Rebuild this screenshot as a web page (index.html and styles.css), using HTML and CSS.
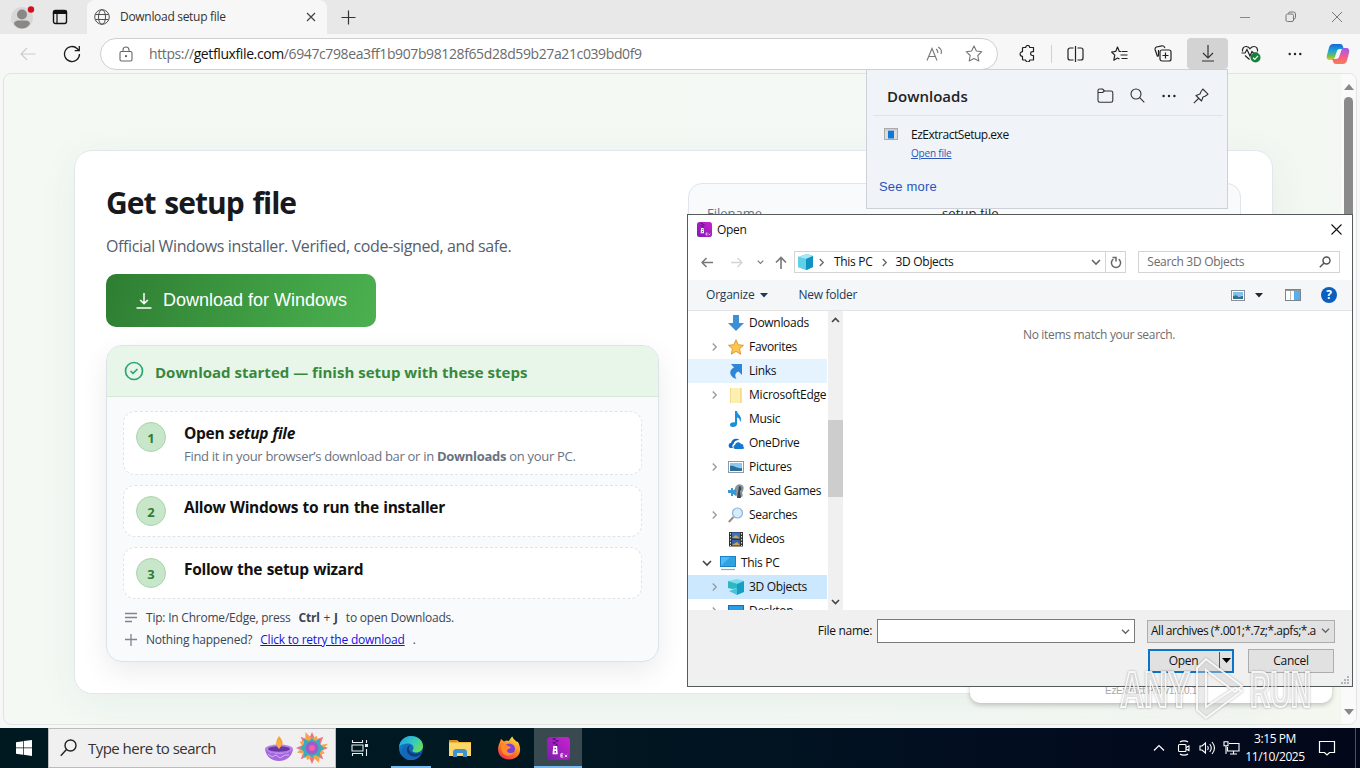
FILE: index.html
```html
<!DOCTYPE html>
<html lang="en">
<head>
<meta charset="utf-8">
<title>Download setup file</title>
<link rel="stylesheet" href="styles.css">
</head>
<body>
<svg class="defs" aria-hidden="true">
  <defs>
    <linearGradient id="cp1" x1="0" y1="0" x2="0" y2="1"><stop offset="0" stop-color="#1667d8"/><stop offset=".45" stop-color="#22a7d8"/><stop offset=".75" stop-color="#6cc04a"/><stop offset="1" stop-color="#f4c52a"/></linearGradient>
    <linearGradient id="cp2" x1="0" y1="0" x2="0" y2="1"><stop offset="0" stop-color="#9a5cf0"/><stop offset=".5" stop-color="#ee5a9a"/><stop offset="1" stop-color="#fb7d4a"/></linearGradient>
    <linearGradient id="ez" x1="0" y1="1" x2="1" y2="0"><stop offset="0" stop-color="#7c1cae"/><stop offset="1" stop-color="#cc22d0"/></linearGradient>
    <linearGradient id="eg1" x1="0" y1="0" x2="1" y2=".6"><stop offset="0" stop-color="#1b9de2"/><stop offset=".6" stop-color="#36c9c0"/><stop offset="1" stop-color="#66dd5c"/></linearGradient>
    <linearGradient id="eg2" x1="0" y1="0" x2="1" y2="1"><stop offset="0" stop-color="#1688d8"/><stop offset="1" stop-color="#0c4aa0"/></linearGradient>
    <linearGradient id="ff" x1=".8" y1="0" x2=".3" y2="1"><stop offset="0" stop-color="#ffe14a"/><stop offset=".5" stop-color="#ff8a20"/><stop offset="1" stop-color="#f0304a"/></linearGradient>
    <symbol id="cube" viewBox="0 0 16 16"><path d="M1 3l9-3 6 2v11l-6 3-9-3z" fill="#35bfe0"/><path d="M1 3l9-3 6 2-7 3z" fill="#a5e9f5"/><path d="M9 5l7-3v11l-7 3z" fill="#0f93c4"/><path d="M1 3l8 2v11l-8-3z" fill="#5fd0e8"/></symbol>
    <symbol id="cube-open" viewBox="0 0 16 16"><path d="M0 2l9-2 7 2-6 3z" fill="#7fdcea"/><path d="M0 2l10 3v4L4 10 0 9z" fill="#2fb6c4"/><path d="M9 5l7-3v11l-7 3z" fill="#149fc6"/><path d="M1 12l8-3v7z" fill="#49c3d6"/></symbol>
    <symbol id="chev-r" viewBox="0 0 8 10"><path d="M2 1l4 4-4 4" fill="none" stroke="currentColor" stroke-width="1.5"/></symbol>
    <symbol id="chev-d" viewBox="0 0 10 8"><path d="M1 2l4 4 4-4" fill="none" stroke="currentColor" stroke-width="1.6"/></symbol>
    <symbol id="ezi" viewBox="0 0 24 24"><rect width="24" height="24" rx="4" fill="url(#ez)"/><path d="M6 1h3v2H6zM9 3h3v2H9zM6 5h3v2H6zM9 7h2v2H9z" fill="#5c1386"/><path d="M6.500 9.500h4l.7 8.500H5.800zM7.800 11.300v1.600h1.500v-1.600zM7.700 14.500v2h1.700v-2z" fill="#fff" fill-rule="evenodd"/><path d="M17 17.500h-2.500V21H17M14.500 19.200h2M18.500 18.500L21 21M21 18.500L18.500 21" stroke="#fff" stroke-width=".9" fill="none"/></symbol>
  </defs>
</svg>

<div class="desktop">
  <div class="browser">
    <div class="tabs">
      <div class="avatar"><svg width="24" height="24" viewBox="0 0 24 24"><circle cx="11" cy="13" r="11" fill="#d8d8d8"/><circle cx="11" cy="9.500" r="5" fill="#8a8886"/><path d="M3 19c0-2 2-3.500 4-3.500h8c2 0 4 1.500 4 3.500-2 3-5 4.500-8 4.500s-6-1.500-8-4.500z" fill="#8a8886"/><circle cx="20" cy="4.500" r="3.200" fill="#d40f1f"/></svg></div>
      <div class="workspace"><svg width="16" height="16" viewBox="0 0 16 16"><rect x="1.500" y="1.500" width="13" height="13" rx="2" fill="none" stroke="#111" stroke-width="1.400"/><path d="M1.500 4.500V3a1.500 1.500 0 011.500-1.500h10A1.500 1.500 0 0114.500 3v1.500zM5 4v11" stroke="#111" stroke-width="1.200" fill="#111"/></svg></div>
      <div class="tab">
        <svg width="16" height="16" viewBox="0 0 16 16" fill="none" stroke="#505050" stroke-width="1"><circle cx="8" cy="8" r="7.300"/><ellipse cx="8" cy="8" rx="3.500" ry="7.300"/><path d="M1.500 5.500h13M1.500 10.500h13"/></svg>
        <span class="tab-title">Download setup file</span>
        <svg width="10" height="10" viewBox="0 0 10 10" stroke="#444" stroke-width="1.200"><path d="M1 1l8 8M9 1L1 9"/></svg>
      </div>
      <svg class="newtab" width="15" height="15" viewBox="0 0 15 15" stroke="#333" stroke-width="1.200"><path d="M7.500 .5v14M.5 7.500h14"/></svg>
      <div class="winctl">
        <svg width="12" height="12" viewBox="0 0 12 12" stroke="#888"><path d="M1 6.500h10"/></svg>
        <svg width="12" height="12" viewBox="0 0 12 12" fill="none" stroke="#777"><rect x="1" y="3" width="7.500" height="7.500" rx="1.500"/><path d="M3.500 3V2.500a1.500 1.500 0 011.500-1.500h3.500a2 2 0 012 2v3.500a1.500 1.500 0 01-1.500 1.500H8.500"/></svg>
        <svg width="12" height="12" viewBox="0 0 12 12" stroke="#777"><path d="M1 1l10 10M11 1L1 11"/></svg>
      </div>
    </div>
    <div class="toolbar">
      <div class="slot back"><svg width="16" height="14" viewBox="0 0 16 14" fill="none" stroke="#ccc" stroke-width="1.200"><path d="M15.500 7H1M7 1L1 7l6 6"/></svg></div>
      <div class="slot reload"><svg width="18" height="18" viewBox="0 0 18 18" fill="none" stroke="#1c1c1c" stroke-width="1.300"><path d="M16.500 9a7.500 7.500 0 11-2.200-5.300L16 5.500M16.300 1v4.700h-4.600"/></svg></div>
      <div class="url">
        <svg width="14" height="16" viewBox="0 0 14 16" fill="none" stroke="#666" stroke-width="1.100"><rect x="1" y="5.500" width="12" height="9.500" rx="1.500"/><path d="M4 5.500V4a3 3 0 016 0v1.500"/><circle cx="7" cy="10.200" r=".6" fill="#555"/></svg>
        <span class="addr">https://<b>getfluxfile.com</b>/6947c798ea3ff1b907b98128f65d28d59b27a21c039bd0f9</span>
        <svg class="aloud" width="17" height="16" viewBox="0 0 17 16" fill="none" stroke="#777" stroke-width="1.100"><path d="M1 14.500L6 2.500l5 12M2.800 10.500h6.400M10 3c1.500 1 2 2.500 1.700 4M12.300 1c2.700 1.800 3.600 4.500 2.700 7"/></svg>
        <svg class="star" width="18" height="17" viewBox="0 0 18 17" fill="none" stroke="#777" stroke-width="1.100" stroke-linejoin="round"><path d="M9 1l2.400 5 5.400.7-4 3.800 1 5.500L9 13.400 4.200 16l1-5.500-4-3.800L6.600 6z"/></svg>
      </div>
      <div class="slot ext"><svg width="17" height="17" viewBox="0 0 17 17" fill="none" stroke="#222" stroke-width="1.200" stroke-linejoin="round"><path d="M4.500 2.500h2.200a2 2 0 014 0h3.800v4.200h-1a1.900 1.900 0 000 3.800h1v4.500h-3.800a2 2 0 01-4 0H4.500c-.8 0-1-.3-1-1v-2.600a2.300 2.300 0 010-4.800V3.500c0-.7.200-1 1-1z"/></svg></div>
      <div class="sep"></div>
      <div class="slots">
        <div class="slot"><svg width="17" height="16" viewBox="0 0 17 16" fill="none" stroke="#222" stroke-width="1.200"><path d="M6.500 2H3a2 2 0 00-2 2v8a2 2 0 002 2h3.500M10.500 2H14a2 2 0 012 2v8a2 2 0 01-2 2h-3.500M8.500 0v16"/></svg></div>
        <div class="slot"><svg width="17" height="16" viewBox="0 0 17 16" fill="none" stroke="#222" stroke-width="1.200" stroke-linejoin="round"><path d="M10 5.500L8.200 5.300 6.500 1 4.800 5.300.6 6l3.200 3.200-1 5L6.500 12 8.500 13M10.500 5.500h6M9.500 9h7M10.500 12.500h6"/></svg></div>
        <div class="slot"><svg width="18" height="17" viewBox="0 0 18 17" fill="none" stroke="#222" stroke-width="1.200"><rect x="6" y="5" width="11" height="11" rx="2"/><path d="M11.500 7.500v6M8.500 10.500h6M3.500 11.500L1.200 5C.8 3.500 1.200 2.500 2.500 2L8 .8c1.300-.2 2 .2 2.500 1.500L11 3M4.500 5v5c0 1-.3 1.500-1 1.500"/></svg></div>
        <div class="slot active"><svg width="14" height="17" viewBox="0 0 14 17" fill="none" stroke="#333" stroke-width="1.200"><path d="M7 0v12.500M2 8l5 5 5-5M1 16h12"/></svg></div>
        <div class="slot"><svg width="20" height="18" viewBox="0 0 20 18" fill="none" stroke="#222" stroke-width="1.200"><path d="M1.500 6.500C1 3.500 2.800 1.500 5 1.500c1.700 0 3 1 4 2.200 1-1.200 2.300-2.200 4-2.200 2.300 0 4 2 3.500 5M4 10.500l4.500 4M.5 8h3.500l2-3.500 3 6.500 2-4.500 1.500 1.500h4"/><circle cx="14.500" cy="12.500" r="5" fill="#14803a" stroke="none"/><path d="M12 12.700l1.800 1.700 3.200-3.500" stroke="#fff"/></svg></div>
        <div class="slot"><svg width="14" height="4" viewBox="0 0 14 4" fill="#222"><circle cx="1.700" cy="2" r="1.200"/><circle cx="7" cy="2" r="1.200"/><circle cx="12.300" cy="2" r="1.200"/></svg></div>
        <div class="slot copilot"><svg width="24" height="22" viewBox="0 0 24 22"><path d="M7 1h7c2 0 2.500 1 3 2.500l.8 2.500H14c-2 0-2.800 1-3.300 2.700L8.500 15c-.5 1.500-1.300 2-2.700 2H4c-3 0-3.800-2-3-5l2-7.500C3.700 2.200 5 1 7 1z" fill="url(#cp1)"/><path d="M17 21h-7c-2 0-2.500-1-3-2.500L6.200 16H10c2 0 2.800-1 3.300-2.700L15.500 7c.5-1.500 1.300-2 2.700-2H20c3 0 3.800 2 3 5l-2 7.500c-.7 2.300-2 3.500-4 3.500z" fill="url(#cp2)"/></svg></div>
      </div>
    </div>
    <div class="view">
      <main class="card">
        <section class="left">
          <h1>Get setup file</h1>
          <p class="sub">Official Windows installer. Verified, code-signed, and safe.</p>
          <a class="cta"><svg width="16" height="18" viewBox="0 0 16 18" fill="none" stroke="#fff" stroke-width="1.500"><path d="M8 1v10.500M4.200 8L8 11.800 11.800 8M.5 16h15"/></svg><span>Download for Windows</span></a>
          <div class="steps">
            <div class="steps-head"><svg width="20" height="20" viewBox="0 0 20 20" fill="none" stroke="#2aa775" stroke-width="1.700"><circle cx="10" cy="10" r="8.500"/><path d="M6.500 10l2.500 2.400 4.500-4.400"/></svg><span>Download started — finish setup with these steps</span></div>
            <div class="steps-body">
              <div class="step first"><div class="num">1</div><div><div class="st">Open <i>setup file</i></div><div class="sd">Find it in your browser’s download bar or in <b>Downloads</b> on your PC.</div></div></div>
              <div class="step"><div class="num">2</div><div class="st">Allow Windows to run the installer</div></div>
              <div class="step"><div class="num">3</div><div class="st">Follow the setup wizard</div></div>
              <div class="tip"><svg width="14" height="14" viewBox="0 0 14 14" stroke="#7d858f" stroke-width="1.300"><path d="M1 2.500h12M1 6.500h12M1 10.500h7"/></svg><span>Tip: In Chrome/Edge, press</span><span class="kbd"><b>Ctrl</b> + <b>J</b></span><span>to open Downloads.</span></div>
              <div class="tip"><svg width="14" height="14" viewBox="0 0 14 14" stroke="#7d858f" stroke-width="1.300"><path d="M7 1v12M1 6.500h12"/></svg><span>Nothing happened?</span><a class="retry">Click to retry the download</a><span>.</span></div>
            </div>
          </div>
        </section>
        <section class="right"><div class="meta"><span class="k">Filename</span><span class="v">setup file</span></div></section>
      </main>
      <div class="scroll"><i class="up"></i><i class="thumb"></i><i class="down"></i></div>
    </div>
  </div>

  <div class="flyout">
    <div class="fly-head"><span class="fly-title">Downloads</span>
      <svg width="17" height="15" viewBox="0 0 17 15" fill="none" stroke="#333" stroke-width="1.100" stroke-linejoin="round"><path d="M1 12.500V2.500C1 1.600 1.600 1 2.500 1h3l2 2H14c1 0 1.800.7 1.800 1.700v7.800c0 1-.8 1.700-1.800 1.700H2.700C1.700 14.200 1 13.500 1 12.500zM1 4.500h4.500L7.500 3"/></svg>
      <svg width="15" height="15" viewBox="0 0 15 15" fill="none" stroke="#333" stroke-width="1.100"><circle cx="6" cy="6" r="5"/><path d="M9.700 9.700l4.600 4.600"/></svg>
      <svg width="14" height="4" viewBox="0 0 14 4" fill="#222"><circle cx="1.600" cy="2" r="1.200"/><circle cx="7" cy="2" r="1.200"/><circle cx="12.400" cy="2" r="1.200"/></svg>
      <svg width="16" height="16" viewBox="0 0 16 16" fill="none" stroke="#333" stroke-width="1.100" stroke-linejoin="round"><path d="M9.800 1L15 6.200l-3 2-2 .8-1.500 4L3 7.500 7 6l.8-2zM5.500 10.500L.8 15.200"/></svg>
    </div>
    <div class="fly-item"><svg width="14" height="12" viewBox="0 0 14 12"><rect x=".5" y=".5" width="13" height="11" fill="#dcdcdc" stroke="#aaa"/><rect x="4" y="2.500" width="6" height="8" fill="#1177d7"/><path d="M1 2h12" stroke="#b8c4d0"/></svg><div><div class="fname">EzExtractSetup.exe</div><a class="ofile">Open file</a></div></div>
    <a class="more">See more</a>
  </div>

  <div class="ezwin">EzExtract Pro v1.0.0.1</div>

  <div class="dialog">
    <div class="d-title"><svg width="15" height="15"><use href="#ezi"/></svg><span>Open</span><svg class="x" width="11" height="11" viewBox="0 0 11 11" stroke="#111" stroke-width="1.100"><path d="M.5 .5l10 10M10.500 .5l-10 10"/></svg></div>
    <div class="d-nav">
      <svg width="12" height="11" viewBox="0 0 12 11" fill="none" stroke="#777" stroke-width="1.500"><path d="M12 5.500H1M5.500 1L1 5.500 5.500 10"/></svg>
      <svg class="n2" width="12" height="11" viewBox="0 0 12 11" fill="none" stroke="#d4d4d4" stroke-width="1.300"><path d="M0 5.500h11M6.500 1L11 5.500 6.500 10"/></svg>
      <svg class="n3" width="7" height="6"><use href="#chev-d"/></svg>
      <svg class="n4" width="12" height="13" viewBox="0 0 12 13" fill="none" stroke="#777" stroke-width="1.600"><path d="M6 13V1.500M1 6.500l5-5 5 5"/></svg>
      <div class="path"><svg width="16" height="16"><use href="#cube"/></svg><svg class="pc" width="7" height="9"><use href="#chev-r"/></svg><span>This PC</span><svg class="pc2" width="7" height="9"><use href="#chev-r"/></svg><span>3D Objects</span><svg class="pd" width="10" height="8"><use href="#chev-d"/></svg><div class="refresh"><svg width="12" height="13" viewBox="0 0 12 13" fill="none" stroke="#666" stroke-width="1.500"><path d="M3.300 3.200A4.600 4.600 0 108.700 3.200M2.500 1.500h3.500v4"/></svg></div></div>
      <div class="search"><span>Search 3D Objects</span><svg width="12" height="12" viewBox="0 0 12 12" fill="none" stroke="#555" stroke-width="1.500"><circle cx="7.500" cy="4.500" r="3.500"/><path d="M5 7L.8 11.200"/></svg></div>
    </div>
    <div class="d-tools"><span class="org">Organize</span><svg width="8" height="5" viewBox="0 0 8 5"><path d="M0 0h8L4 4.500z" fill="#1e3a56"/></svg><span class="nf">New folder</span>
      <svg class="t1" width="14" height="11" viewBox="0 0 14 11"><rect x=".5" y=".5" width="13" height="10" fill="#fff" stroke="#8a9099"/><path d="M2 2h10v3l-4 2-3-2-3 1z" fill="#7fc0ec"/><path d="M2 6l3-1 3 2 4-1.500V9H2z" fill="#36718f"/></svg>
      <svg width="8" height="5" viewBox="0 0 8 5"><path d="M0 0h8L4 4.500z" fill="#1e2a36"/></svg>
      <svg class="t2" width="16" height="12" viewBox="0 0 16 12"><rect x=".5" y=".5" width="15" height="11" fill="#fff" stroke="#7a8490"/><path d="M.5 1.500h15" stroke="#9a9a9a"/><path d="M5.500 2v9" stroke="#bbb"/><rect x="9" y="2" width="6" height="9" fill="#58aee8"/></svg>
      <div class="help">?</div>
    </div>
    <div class="d-body">
      <div class="tree">
        <div class="row"><i></i><svg width="16" height="16" viewBox="0 0 16 16"><path d="M5 0h6v8h5l-8 8-8-8h5z" fill="#3f8fd6"/></svg><span>Downloads</span></div>
        <div class="row"><i><svg width="7" height="10"><use href="#chev-r"/></svg></i><svg width="16" height="16" viewBox="0 0 16 16"><path d="M8 .8l2.200 5 5.300.5-4 3.600 1.200 5.300L8 12.400l-4.700 2.800 1.200-5.300-4-3.600 5.300-.5z" fill="#fdc64f" stroke="#dd9a3c"/></svg><span>Favorites</span></div>
        <div class="row hover"><i></i><svg width="16" height="16" viewBox="0 0 16 16"><path d="M3 1h11v11l-3.500-3.500C7 10 6.500 12.500 8.500 16 3 14.500 1 10 3 7c1-1.500 2-2 3-2.500z" fill="#2d86d8"/></svg><span>Links</span></div>
        <div class="row"><i><svg width="7" height="10"><use href="#chev-r"/></svg></i><svg width="16" height="16" viewBox="0 0 16 16"><path d="M2 1h9l3 1v14H2z" fill="#fdeeb1"/><path d="M12 1h1.500v15H12z" fill="#f3db8a"/><path d="M2 1h1v15H2z" fill="#f1dc93"/></svg><span class="edge">MicrosoftEdge</span></div>
        <div class="row"><i></i><svg width="16" height="16" viewBox="0 0 16 16"><path d="M7 0h2c0 3 4 4 4 8 0 1.500-.5 2.500-1 3 0-3-1-4-3-4.500V13c0 2-2 3-4 3s-3-1-3-2.300C2 12 4 11 7 11.500z" fill="#1b8fdc"/></svg><span>Music</span></div>
        <div class="row"><i></i><svg width="16" height="16" viewBox="0 0 16 16"><path d="M1 12c-1-2 0-4 2-4 .5-3.500 5-6 8.500-3C8 5 6 6.500 5.500 9 4 10 4 11.500 5 13H3c-1 0-1.500-.3-2-1z" fill="#0f6cbd"/><path d="M7 14c-2-.5-2-3.500 0-4 .5-3 4.500-3.800 6-1 2-.3 2.700 1 2.200 2.500 1.200.8.800 2.500-.7 2.500z" fill="#1479d0"/></svg><span>OneDrive</span></div>
        <div class="row"><i><svg width="7" height="10"><use href="#chev-r"/></svg></i><svg width="16" height="16" viewBox="0 0 16 16"><rect x=".5" y="2.500" width="15" height="11" fill="#fff" stroke="#8d9aa6"/><path d="M2 4h12v5H2z" fill="#8cc8f0"/><path d="M2 7c4-1 7 3 12 2v3H2z" fill="#2f6f96"/></svg><span>Pictures</span></div>
        <div class="row"><i></i><svg width="16" height="16" viewBox="0 0 16 16"><path d="M7 5c1-3 4-5 7-3 2 1 2 4 1 6l-1 2c1 1 1 3 0 4H9c-2-3-2-7-2-9z" fill="#8996a0"/><path d="M11 3c3 0 3 4 1 5l1 7H9z" fill="#3a4650"/><path d="M0 7h3V5h2v2l3-1v7l-3-2v2H3v-3H0z" fill="#3a97d3"/></svg><span>Saved Games</span></div>
        <div class="row"><i><svg width="7" height="10"><use href="#chev-r"/></svg></i><svg width="16" height="16" viewBox="0 0 16 16"><path d="M5.500 10L.8 15" stroke="#9a8f88" stroke-width="2"/><circle cx="9.500" cy="6" r="5" fill="#d5edfb" stroke="#8fb4d2" stroke-width="1.200"/></svg><span>Searches</span></div>
        <div class="row"><i></i><svg width="16" height="16" viewBox="0 0 16 16"><rect x="1" y="1" width="14" height="14.500" fill="#2f3237"/><rect x="4" y="1.500" width="8" height="6" fill="#3f73b8"/><rect x="4" y="9" width="8" height="6" fill="#3b62a3"/><path d="M4 7l4-3 4 3.500zM4 14l5-3 3 3z" fill="#d6a247"/><path d="M2.500 2v13M13.500 2v13" stroke="#e4e4e4" stroke-dasharray="1.500 1.500"/></svg><span>Videos</span></div>
        <div class="row top"><i class="open"><svg width="10" height="8"><use href="#chev-d"/></svg></i><svg width="16" height="16" viewBox="0 0 16 16"><rect x="0" y="1" width="16" height="11" fill="#1a83c8"/><path d="M1 2h14v9H1z" fill="#4ebcf2"/><path d="M1 11l9-9h5v9z" fill="#2fa2e2"/><path d="M1 14.500h14" stroke="#98a6b0" stroke-width="1.200"/></svg><span>This PC</span></div>
        <div class="row sel"><i><svg width="7" height="10"><use href="#chev-r"/></svg></i><svg width="16" height="16"><use href="#cube-open"/></svg><span>3D Objects</span></div>
        <div class="row"><i><svg width="7" height="10"><use href="#chev-r"/></svg></i><svg width="16" height="16" viewBox="0 0 16 16"><rect y="2" width="16" height="12" fill="#0f6fc0"/><rect x="1" y="3" width="14" height="9" fill="#2a9ce8"/></svg><span>Desktop</span></div>
      </div>
      <div class="tscroll"><svg width="9" height="6" viewBox="0 0 9 6" fill="none" stroke="#444" stroke-width="1.600"><path d="M1 5l3.500-3.500L8 5"/></svg><div class="tthumb"></div><svg width="9" height="6" viewBox="0 0 9 6" fill="none" stroke="#444" stroke-width="1.600"><path d="M1 1l3.500 3.500L8 1"/></svg></div>
      <div class="files">No items match your search.</div>
    </div>
    <div class="d-foot">
      <div class="f1"><label>File name:</label><div class="fin"><svg width="9" height="7"><use href="#chev-d"/></svg></div><div class="ftype"><span>All archives (*.001;*.7z;*.apfs;*.a</span><svg width="9" height="7"><use href="#chev-d"/></svg></div></div>
      <div class="f2"><div class="btn ok"><span>Open</span><em><svg width="9" height="5" viewBox="0 0 9 5"><path d="M0 0h9L4.500 5z" fill="#000"/></svg></em></div><div class="btn">Cancel</div></div>
      <svg class="grip" width="9" height="9" viewBox="0 0 9 9" fill="#b5b5b5"><path d="M6 0h2v2H6zM3 3h2v2H3zM6 3h2v2H6zM0 6h2v2H0zM3 6h2v2H3zM6 6h2v2H6z"/></svg>
    </div>
  </div>

  <svg class="mark" width="210" height="72" viewBox="0 0 210 72">
    <g fill="#fff" fill-opacity=".35" stroke="#fff" stroke-opacity=".85" stroke-width="2">
      <text x="10" y="54" textLength="70" lengthAdjust="spacingAndGlyphs">ANY</text>
      <text x="140" y="54" textLength="61" lengthAdjust="spacingAndGlyphs">RUN</text>
      <path d="M87 15l9-9 36 27-7 6-29-22v37l29-19 7 3-36 27-9-8z"/>
    </g>
  </svg>

  <div class="taskbar">
    <div class="start"><svg width="16" height="16" viewBox="0 0 16 16" fill="#fff"><path d="M0 2.300L7 1.200v6.300H0zM7.700 1.100L16 0v7.500H7.700zM0 8.300h7v6.400L0 13.700zM7.700 8.300H16V16l-8.300-1.200z"/></svg></div>
    <div class="tsearch"><svg width="18" height="18" viewBox="0 0 18 18" fill="none" stroke="#222" stroke-width="1.400"><circle cx="10.500" cy="6.500" r="5.500"/><path d="M6.500 10.500L.8 16.800"/></svg><span>Type here to search</span>
      <svg class="festive" width="64" height="36" viewBox="0 0 64 36"><path d="M14 6c4 5 5 8 1 13-5-3-5-7-1-13z" fill="#f7a02c"/><path d="M14 11c2 3 2 5 0 8-2-3-2-5 0-8z" fill="#ffe279"/><ellipse cx="14" cy="19" rx="14" ry="4.500" fill="#b782e8"/><ellipse cx="14" cy="19" rx="11" ry="2.700" fill="#6a38a5"/><path d="M14 9c3 4 3 7 0 10-3-3-3-6 0-10z" fill="#f9b03c"/><path d="M0 19c1 8 7 12 14 12s13-4 14-12c-4 6-24 6-28 0z" fill="#a468de"/><path d="M3 24l4 3 4-2 4 3 5-3 4 0" stroke="#d6aef5" fill="none"/>
        <g transform="translate(47 18)"><g fill="#ef7286"><path id="pt" d="M0-16l4 9h-8z"/><use href="#pt" transform="rotate(45)"/><use href="#pt" transform="rotate(90)"/><use href="#pt" transform="rotate(135)"/><use href="#pt" transform="rotate(180)"/><use href="#pt" transform="rotate(225)"/><use href="#pt" transform="rotate(270)"/><use href="#pt" transform="rotate(315)"/></g><path transform="rotate(22.500)" d="M0-13l5 8 8-5-3 8 4 2-4 3 2 8-8-3-4 5-4-5-8 2 3-8-5-3 5-3-3-8 8 3z" fill="#f4a646"/><path d="M0-10l3 3 5-2 0 5 4 4-4 4 0 5-5-2-3 3-3-3-5 2 0-5-4-4 4-4 0-5 5 2z" fill="#39aeba"/><circle r="6.500" fill="#9d5ccc"/><circle r="3" fill="#ee5fae"/></g></svg>
    </div>
    <div class="app"><svg width="18" height="16" viewBox="0 0 18 16" fill="none" stroke="#e8edf0" stroke-width="1.100"><path d="M1.500 0v2.500h10V0M1.500 16v-2.500h10V16M1 5h11v6H1zM15.500 0v3M15.500 9v7"/><path d="M14.500 4.500h2v2h-2z" fill="#fff"/></svg></div>
    <div class="app run"><svg width="24" height="24" viewBox="0 0 24 24"><circle cx="12" cy="12" r="12" fill="url(#eg2)"/><path d="M0 11C1 4 6 0 12 0c7 0 12 4.500 12 10 0 4-3 6.500-7 6.500-3 0-4-1.200-3.500-2.200.8-.8 1-1.500 1-2.500 0-2.600-2.500-4.300-5.500-4.300C5 7.500 1 9 0 11z" fill="url(#eg1)"/><path d="M9 8c-5 5-2 12 5 13 3 .4 6-.5 8-2.500-4 7-13 7-17 3C1 17 3 10 9 8z" fill="#1568b8"/><path d="M13 9c-2 0-3.500 2-3 4.500.7 3 5 5.500 11 3.500l1 .7c-2 2.500-6 3.300-9 2.300-4-1.300-6-5-5-8 .6-2 2.500-3.500 5-3z" fill="#0b3e7c"/></svg></div>
    <div class="app"><svg width="22" height="18" viewBox="0 0 22 18"><path d="M0 1h8l2 2h12v14H0z" fill="#f0b73e"/><path d="M0 1h8v2H0z" fill="#d88e22"/><path d="M0 4h22v13H0z" fill="#fcd667"/><path d="M4 17v-5l2-2h10l2 2v6h-4v-4H8v4H4z" fill="#3f93cf"/></svg></div>
    <div class="app"><svg width="24" height="24" viewBox="0 0 24 24"><path d="M3 6l1-3 3 2.500C9 4 11 4.500 12 5c1-2 2-3.500 3.500-4.500 0 2 2 3 4 5L21 6c4 7 3 17-9 17.500C1 23.500-1 13 3 6z" fill="url(#ff)"/><circle cx="12.500" cy="13" r="5.500" fill="#7b3fe0"/><path d="M4 9c3-1 5-.5 7 1l3 1c-1 2-3 1.500-4 3 0 3 4 4 7 2-2 5-11 5-12-1z" fill="#ff8b2a"/></svg></div>
    <div class="app run cur"><svg width="23" height="23"><use href="#ezi"/></svg></div>
    <div class="tray">
      <svg width="12" height="8" viewBox="0 0 12 8" fill="none" stroke="#fff" stroke-width="1.200"><path d="M1 6.500l5-5 5 5"/></svg>
      <svg width="14" height="16" viewBox="0 0 14 16" fill="none" stroke="#fff" stroke-width="1.100"><rect x="1.500" y="4.500" width="7.500" height="7" rx="1"/><path d="M9 7.500l3-1.500v4.500l-3-1.500M3 2c2-1.500 6-1.500 8 0M3 14c2 1.500 6 1.500 8 0"/></svg>
      <svg width="17" height="14" viewBox="0 0 17 14" fill="none" stroke="#fff" stroke-width="1.100"><path d="M1 5v4h2l3.500 3V2L3 5zM8.500 5q1.500 2 0 4M10.700 3q3.200 4 0 8M13 1q5 6 0 12"/></svg>
      <svg width="17" height="14" viewBox="0 0 17 14" fill="none" stroke="#fff" stroke-width="1.100"><path d="M6 2.500h10v7.500H4.500V6M10.500 10v3M7 13h7M1 .8h4v4H1zM3 5v8"/></svg>
      <div class="clock"><div>3:15 PM</div><div>11/10/2025</div></div>
      <svg width="18" height="17" viewBox="0 0 18 17" fill="none" stroke="#fff" stroke-width="1.200"><path d="M1.500 1.500h15v11h-5L9 15l-2.500-2.500h-5z"/></svg>
      <div class="peek"></div>
    </div>
  </div>
</div>
</body>
</html>
```
FILE: styles.css
```css
* { box-sizing: border-box; }
body { margin: 0; overflow: hidden; font-family: "Open Sans", "Noto Sans", sans-serif; font-size: 12px; color: #111; }
.defs { position: absolute; width: 0; height: 0; }
svg { flex: none; display: block; }
span, a, label { white-space: nowrap; }
.desktop { position: relative; width: 1360px; height: 768px; display: flex; flex-direction: column; overflow: hidden; }

/* browser */
.browser { height: 728px; background: #f7f7f7; display: flex; flex-direction: column; }
.tabs { height: 34px; background: #e8e8e8; display: flex; align-items: center; }
.avatar { width: 24px; margin-left: 11px; }
.workspace { margin-left: 17px; }
.tab { width: 240px; height: 34px; margin-left: 19px; padding: 0 11px 1px 7px; background: #f7f7f7; border-radius: 8px 8px 0 0; display: flex; align-items: center; }
.tab-title { margin-left: 10px; flex: 1; letter-spacing: -.3px; color: #333; }
.newtab { margin-left: 14px; }
.winctl { margin-left: auto; margin-right: 17px; display: flex; gap: 34px; }
.toolbar { height: 39px; display: flex; align-items: center; }
.slot { width: 40px; height: 31px; display: flex; align-items: center; justify-content: center; }
.back { margin-left: 8px; }
.reload { margin-left: 4px; }
.url { width: 898px; height: 32px; margin-left: 8px; border: 1px solid #cfcfcf; border-radius: 16px; background: #fff; display: flex; align-items: center; padding: 0 14px 0 18px; }
.addr { margin-left: 16px; flex: 1; font-size: 14px; letter-spacing: -.39px; color: #6b6b6b; }
.addr b { font-weight: 400; color: #111; }
.url .star { margin-left: 22px; }
.ext { margin-left: 9px; }
.sep { width: 1px; height: 18px; margin: 0 3px 0 4px; background: #d0d0d0; }
.slots { display: flex; gap: 4px; }
.slots .active { width: 41px; margin-right: -1px; background: #d3d3d3; border-radius: 4px; }
.copilot { margin-left: -1px; }
.view { height: 652px; margin: 0 3px; border: 1px solid #e2e4e3; border-radius: 8px; background: linear-gradient(100deg, #f5f9f4, #f4f9f5 60%, #f3f7f0); display: flex; overflow: hidden; }

/* page card */
.card { width: 1199px; height: 544px; margin: 76px 0 0 70px; padding: 31px; border: 1px solid #dfe8ea; border-radius: 18px; background: #fff; box-shadow: 0 8px 40px rgba(20, 60, 60, .06); display: flex; gap: 29px; }
.left, .right { width: 553px; }
.left { display: flex; flex-direction: column; align-items: flex-start; }
h1 { margin: 2px 0 0; font-size: 30px; line-height: 38px; letter-spacing: -1px; word-spacing: 2px; color: #17191c; white-space: nowrap; }
.sub { margin: 12px 0 0; font-size: 16px; line-height: 24px; letter-spacing: -.38px; color: #55606d; }
.cta { width: 270px; height: 53px; margin-top: 16px; padding-left: 30px; border-radius: 10px; background: linear-gradient(110deg, #2e7d32, #43a547 72%, #4caf50); display: flex; align-items: center; gap: 11px; font: 18px "Liberation Sans", sans-serif; color: #fff; }
.steps { width: 553px; height: 317px; margin-top: 18px; border: 1px solid #dce3e8; border-radius: 16px; background: #f8fafc; box-shadow: 0 10px 28px rgba(0, 0, 0, .08); overflow: hidden; }
.steps-head { height: 51px; padding: 2px 0 0 17px; border-bottom: 1px solid #d3e8d6; background: #e8f5e9; display: flex; align-items: center; gap: 11px; font-size: 15px; font-weight: 700; letter-spacing: .01px; color: #38883d; }
.steps-head svg { margin-top: -3px; }
.steps-body { padding: 14px 16px 0; }
.step { height: 52px; margin-bottom: 10px; padding: 10px 12px; border: 1px dashed #dfe4e8; border-radius: 12px; background: #fff; display: flex; gap: 18px; }
.step.first { height: 64px; }
.num { width: 30px; height: 30px; border: 1px solid #a8d5aa; border-radius: 50%; background: #c8e6c9; display: flex; align-items: center; justify-content: center; padding-top: 1px; font-size: 13px; font-weight: 700; color: #2e7d32; }
.st { font-size: 15.500px; line-height: 23px; font-weight: 700; letter-spacing: -.3px; word-spacing: .7px; color: #111; white-space: nowrap; }
.sd { font-size: 13px; line-height: 22px; letter-spacing: -.3px; color: #68737f; white-space: nowrap; }
.tip { height: 22px; display: flex; align-items: center; padding: 0 0 1px 1px; font-size: 12px; letter-spacing: -.22px; color: #3c4550; }
.tip svg { margin-right: 8px; }
.tip:nth-last-child(2) { margin-top: -2px; }
.kbd { margin: 0 8px; word-spacing: 1px; }
.retry { margin: 0 8px; text-decoration: underline; color: #1512e0; }
.meta { height: 420px; padding: 20px 18px; border: 1px solid #dfe5ea; border-radius: 14px; background: #f8fafc; display: flex; font-size: 13px; line-height: 18px; margin-top: 1px; }
.k { width: 235px; color: #68737f; }
.v { color: #222; letter-spacing: .1px; }
.scroll { width: 15px; margin-left: auto; background: #fafafa; display: flex; flex-direction: column; align-items: center; padding: 10px 0 9px; }
.up { border: 5px solid transparent; border-top: 0; border-bottom: 6px solid #888; }
.down { border: 5px solid transparent; border-bottom: 0; border-top: 6px solid #888; margin-top: auto; }
.thumb { width: 9px; height: 330px; margin-top: 7px; border-radius: 5px; background: #8a8a8a; }

/* downloads flyout */
.flyout { position: absolute; left: 866px; top: 69px; width: 362px; height: 140px; padding: 0 4px; border: 1px solid #cdd0d6; background: #f0f3f8; }
.fly-head { height: 46px; margin-left: 2px; padding: 6px 14px 0 14px; border-bottom: 1px solid #e0e3e9; display: flex; align-items: center; }
.fly-title { flex: 1; font-size: 15px; font-weight: 600; letter-spacing: .02px; color: #222; }
.fly-head svg + svg { margin-left: 17px; }
.fly-head svg:nth-of-type(2) { margin-left: 16px; }
.fly-item { display: flex; padding: 9px 0 0 13px; }
.fly-item > svg { margin: 3px 13px 0 0; }
.fname { line-height: 20px; letter-spacing: -.48px; }
.ofile { display: block; font-size: 10px; line-height: 17px; text-decoration: underline; letter-spacing: -.2px; color: #2c56b8; }
.more { display: block; margin: 15px 0 0 8px; font: 13px/20px "Liberation Sans", sans-serif; letter-spacing: .2px; color: #2a55b5; }

.ezwin { position: absolute; left: 970px; top: 600px; width: 362px; height: 103px; border-radius: 10px; background: #fff; box-shadow: 0 2px 5px rgba(0, 0, 0, .22); padding-top: 84px; text-align: center; font: 10px/14px "Liberation Sans", sans-serif; letter-spacing: -.35px; color: #aaa; }

/* open dialog */
.dialog { position: absolute; left: 687px; top: 214px; width: 666px; height: 473px; border: 1px solid #555a5d; background: #fff; display: flex; flex-direction: column; letter-spacing: -.3px; }
.d-title { height: 29px; padding: 0 10px 0 9px; display: flex; align-items: center; }
.d-title span { margin-left: 5px; }
.x { margin-left: auto; }
.d-nav { height: 36px; padding: 0 12px 0 13px; display: flex; align-items: center; color: #777; }
.n2 { margin-left: 18px; }
.n3 { margin-left: 14px; }
.n4 { margin-left: 11px; }
.path { width: 333px; height: 22px; margin-left: 7px; border: 1px solid #d4d4d4; display: flex; align-items: center; padding-left: 2px; color: #666; }
.path span, .search span { padding-bottom: 1px; }
.path span { color: #111; }
.pc { margin: 0 9px 0 5px; }
.pc2 { margin: 0 8px; }
.pd { margin-left: auto; margin-right: 4px; }
.refresh { width: 20px; height: 20px; border-left: 1px solid #d4d4d4; display: flex; align-items: center; justify-content: center; }
.search { width: 202px; height: 22px; margin-left: 12px; padding: 0 8px; border: 1px solid #d4d4d4; display: flex; align-items: center; justify-content: space-between; color: #6b6b6b; }
.d-tools { height: 31px; padding: 0 15px 0 18px; border-bottom: 1px solid #e4e4e4; background: #f5f6f7; display: flex; align-items: center; color: #1e3a56; }
.d-tools span { padding-bottom: 2px; }
.org { margin-right: 5px; letter-spacing: -.2px; }
.nf { margin-left: 31px; }
.t1 { margin-left: auto; margin-right: 10px; }
.t2 { margin: 0 20px 0 22px; }
.help { width: 16px; height: 16px; border-radius: 50%; background: #0a5fc0; color: #fff; font-weight: 700; line-height: 16px; text-align: center; }
.d-body { height: 299px; display: flex; }
.tree { width: 139px; overflow: hidden; }
.row { height: 24px; display: flex; align-items: center; padding-left: 23px; }
.row i { width: 8px; margin-right: 9px; color: #999; flex: none; }
.row span { margin-left: 5px; padding-bottom: 2px; }
.row .edge { letter-spacing: -.22px; }
.row.top { padding-left: 14px; }
.row i.open { width: 10px; margin-right: 8px; color: #444; }
.hover { background: #e5f3ff; }
.sel { background: #cce8ff; }
.tscroll { width: 15px; margin-left: 1px; background: #f0f0f0; display: flex; flex-direction: column; align-items: center; padding: 6px 0 5px; }
.tthumb { width: 15px; height: 77px; margin: 97px 0 auto; background: #cdcdcd; }
.files { flex: 1; padding-top: 15px; text-align: center; line-height: 17px; color: #6d6d6d; letter-spacing: -.31px; padding-left: 3px; }
.d-foot { position: relative; flex: 1; background: #f0f0f0; padding: 9px 17px 0 0; }
.f1 { display: flex; align-items: center; justify-content: flex-end; }
.f1 label { padding-bottom: 1px; }
.fin { width: 258px; height: 24px; margin: 0 12px 0 5px; border: 1px solid #7a7a7a; background: #fff; display: flex; align-items: center; justify-content: flex-end; padding-right: 4px; color: #666; }
.ftype { width: 188px; height: 23px; border: 1px solid #adadad; background: #e1e1e1; display: flex; align-items: center; justify-content: space-between; padding: 0 4px 1px 3px; letter-spacing: -.48px; }
.ftype svg { color: #666; }
.f2 { display: flex; justify-content: flex-end; gap: 14px; margin: 6px 1px 0 0; }
.btn { width: 86px; height: 24px; border: 1px solid #adadad; background: #e1e1e1; display: flex; align-items: center; justify-content: center; padding-bottom: 1px; }
.ok { border: 2px solid #0b73c8; }
.ok span { flex: 1; text-align: center; padding-right: 2px; }
.ok em { width: 13px; height: 17px; border-left: 1px solid #555; display: flex; align-items: center; padding-left: 2px; }
.grip { position: absolute; right: 2px; bottom: 1px; }

/* watermark */
.mark { position: absolute; left: 1110px; top: 653px; filter: drop-shadow(0 0 1px rgba(0, 0, 0, .35)); font: 700 50px "Liberation Sans", sans-serif; }

/* taskbar */
.taskbar { height: 40px; background: linear-gradient(90deg, #001920, #011822 40%, #020d20 75%, #020819); display: flex; color: #fff; }
.start { width: 48px; display: flex; align-items: center; justify-content: center; }
.tsearch { width: 288px; border: 1px solid #bbb; background: #f0f0f0; display: flex; align-items: center; padding-left: 11px; color: #333; }
.tsearch span { margin-left: 10px; font-size: 15px; letter-spacing: -.53px; flex: 1; }
.festive { margin-right: 6px; }
.app { width: 48px; margin-right: 1px; display: flex; align-items: center; justify-content: center; }
.run { box-shadow: inset 0 -2px #76b9ed; }
.run:not(.cur) { width: 40px; margin: 0 5px 0 6px; }
.cur { background: #384950; }
.tray { margin-left: auto; display: flex; align-items: center; }
.tray > svg:nth-child(2) { margin-left: 12px; }
.tray > svg:nth-child(3) { margin-left: 8px; }
.tray > svg:nth-child(4) { margin-left: 7px; }
.clock { width: 70px; text-align: center; line-height: 18px; letter-spacing: -.42px; }
.clock + svg { margin-left: 8px; }
.peek { width: 1px; height: 40px; margin-left: 19px; margin-right: 4px; background: #4a5260; }
```
